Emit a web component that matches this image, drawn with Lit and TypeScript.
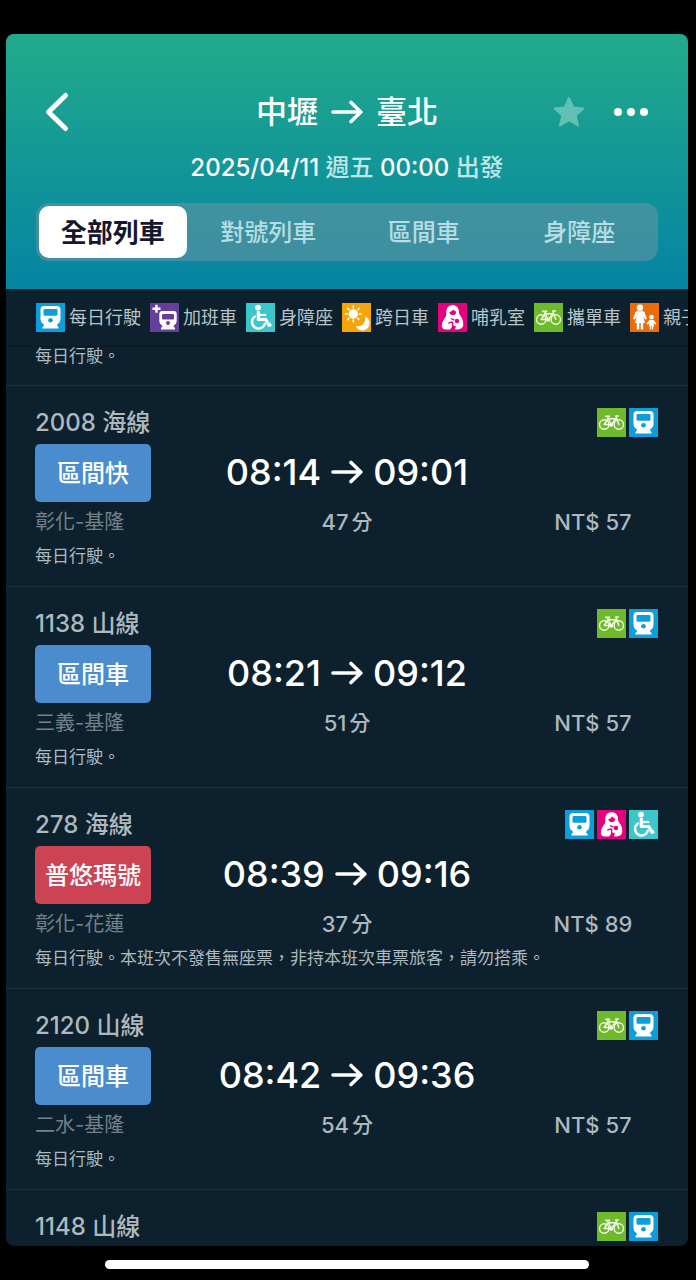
import { LitElement, html, css, svg, nothing } from "lit";
import { customElement, property, state } from "lit/decorators.js";

type IconName = "daily" | "extra" | "access" | "overnight" | "nursing" | "bike" | "family";

interface Trip {
  kind: string;
  express?: boolean;
  route: string;
  depart: string;
  arrive: string;
  minutes: number;
  fare: number;
  note: string;
}

interface Train {
  no: string;
  line: string;
  icons: IconName[];
  trip?: Trip;
}

const LEGEND: { icon: IconName; label: string }[] = [
  { icon: "daily", label: "每日行駛" },
  { icon: "extra", label: "加班車" },
  { icon: "access", label: "身障座" },
  { icon: "overnight", label: "跨日車" },
  { icon: "nursing", label: "哺乳室" },
  { icon: "bike", label: "攜單車" },
  { icon: "family", label: "親子車" },
];

const TABS = ["全部列車", "對號列車", "區間車", "身障座"];

const TRAINS: Train[] = [
  {
    no: "2008", line: "海線", icons: ["bike", "daily"],
    trip: { kind: "區間快", route: "彰化-基隆", depart: "08:14", arrive: "09:01", minutes: 47, fare: 57, note: "每日行駛。" },
  },
  {
    no: "1138", line: "山線", icons: ["bike", "daily"],
    trip: { kind: "區間車", route: "三義-基隆", depart: "08:21", arrive: "09:12", minutes: 51, fare: 57, note: "每日行駛。" },
  },
  {
    no: "278", line: "海線", icons: ["daily", "nursing", "access"],
    trip: {
      kind: "普悠瑪號", express: true, route: "彰化-花蓮", depart: "08:39", arrive: "09:16", minutes: 37, fare: 89,
      note: "每日行駛。本班次不發售無座票，非持本班次車票旅客，請勿搭乘。",
    },
  },
  {
    no: "2120", line: "山線", icons: ["bike", "daily"],
    trip: { kind: "區間車", route: "二水-基隆", depart: "08:42", arrive: "09:36", minutes: 54, fare: 57, note: "每日行駛。" },
  },
  { no: "1148", line: "山線", icons: ["bike", "daily"] },
];

const GLYPHS: Record<IconName, { bg: string; name: string; art: unknown }> = {
  daily: {
    bg: "#0c9ddb",
    name: "每日行駛",
    art: svg`
      <path fill="#fff" d="M8.300 3h12.400q3.800 0 3.800 3.800v8.700q0 4-3 5.500l-.5 1.500 1.500 1.500v1.500H6.500V24L8 22.500 7.500 21q-3-1.500-3-5.500V6.800Q4.500 3 8.300 3z"/>
      <rect x="7.500" y="6" width="14" height="6.800" rx="1.400" fill="#0c9ddb"/>
      <circle cx="14.500" cy="17.300" r="2.300" fill="#0c9ddb"/>`,
  },
  extra: {
    bg: "#65409a",
    name: "加班車",
    art: svg`
      <path stroke="#fff" stroke-width="2.400" d="M6.500 1.700v8M2.500 5.700h8"/>
      <path fill="#fff" d="M12.300 8h11.400q3 0 3 3v6.500q0 3.500-2.700 4.700l-.4 1.300 1.400 1.500v1.500H11V25l1.400-1.500-.4-1.300q-2.700-1.200-2.700-4.700V11q0-3 3-3z"/>
      <rect x="12" y="11" width="12" height="5.500" rx="1" fill="#65409a"/>
      <circle cx="18" cy="20" r="2" fill="#65409a"/>`,
  },
  access: {
    bg: "#3cc6cc",
    name: "身障座",
    art: svg`
      <circle cx="12" cy="4.600" r="2.900" fill="#fff"/>
      <path fill="none" stroke="#fff" stroke-width="3.200" stroke-linejoin="round" d="M12.300 8v8.500h7.500l3.200 5.800 2.300-.9"/>
      <path stroke="#fff" stroke-width="2.200" d="M13 12h7.200"/>
      <path fill="none" stroke="#fff" stroke-width="2.400" stroke-linecap="round" d="M9 13.600a6.500 6.500 0 1 0 9.800 7.200"/>`,
  },
  overnight: {
    bg: "#f5a50c",
    name: "跨日車",
    art: svg`
      <circle cx="11.300" cy="11" r="4.700" fill="#fff"/>
      <path stroke="#fff" stroke-width="1.500" stroke-linecap="round" d="M11.300 3v2M11.300 17v2M3.300 11h2M17.300 11h2M5.700 5.400l1.300 1.300M15.700 15.400l1.200 1.200M5.700 16.600l1.300-1.300M15.700 6.700l1.300-1.300"/>
      <path fill="#fff" d="M23.300 13.500a7.300 7.300 0 1 1-9.600 9.600q5.300.8 7.800-2.200 2.400-3 1.800-7.400z"/>`,
  },
  nursing: {
    bg: "#e4007f",
    name: "哺乳室",
    art: svg`
      <path fill="#fff" d="M14.500 2.300c4 0 6.300 2.700 6.500 6.200.1 1.800.2 2.800 1.500 4.500 2.200 2.700 3 5.800 2.700 9.300-.2 2.700-2.500 4.100-5.400 4.100l-3.200-.2 1.500-2.700-3-1-3 3.900H8c-2.900 0-4.500-1.500-4.200-4.200.4-3.300 2-5.900 3.700-8.200 1.200-1.700.6-3.400.8-5.500.3-3.700 2.400-6.200 6.200-6.200z"/>
      <path fill="#e4007f" d="M11.300 9.300q2.600-.5 4-2.700 1.600 1.800 3 2.100-.3 3.400-3.300 3.400-3 0-3.700-2.800z"/>
      <path fill="none" stroke="#e4007f" stroke-width="1.300" d="M10.300 20.500q1.700-1.500 4.500-1.500M14.600 19v6.500M13 15.500l3.500 1.700"/>
      <circle cx="19" cy="18" r="2.200" fill="#e4007f"/>`,
  },
  bike: {
    bg: "#6fb92c",
    name: "攜單車",
    art: svg`
      <g fill="none" stroke="#f3fbe6" stroke-width="1.400" stroke-linecap="round" stroke-linejoin="round">
        <circle cx="7.200" cy="16.500" r="4.700"/>
        <circle cx="21.800" cy="16.500" r="4.700"/>
        <path d="M7.200 16.500l4-6 3 6 5-6-8 .2M7.200 16.500h6M21.800 16.500l-3-8.500h2.500"/>
        <path stroke-width="1.800" d="M8.800 8.300h3.700M10.700 8.500l.8 2"/>
      </g>
      <circle cx="14.200" cy="16.800" r="2" fill="#f3fbe6"/>`,
  },
  family: {
    bg: "#ea6c0a",
    name: "親子車",
    art: svg`
      <circle cx="10" cy="4.700" r="3.200" fill="#fff"/>
      <path fill="#fff" d="M7 8.300h6q1.200 0 1.700 1.200l2.200 6.200-1.700.9-2.200-3.600 2.200 7h-2v6.500h-2.500V20H9.300v6.500H6.800V20h-2l2.200-7-2.200 3.600-1.700-.9 2.200-6.200q.5-1.200 1.700-1.200z"/>
      <circle cx="21.500" cy="14" r="2.300" fill="#fff"/>
      <path fill="#fff" d="M19.700 16.800h3.600l3.200 3.700-1 1.200-2-1.500.7 3h-1v3.300h-1.300v-3.300h-.8v3.300h-1.300v-3.300h-1l.7-3-2 1.500-1-1.200z"/>`,
  },
};

@customElement("service-icon")
class ServiceIcon extends LitElement {
  static styles = css`
    :host { display: block; width: 29px; height: 29px; flex: none; }
    .art { display: block; width: 100%; height: 100%; }
  `;
  @property() name: IconName = "daily";

  render() {
    const g = GLYPHS[this.name];
    return html`<svg class="art" viewBox="0 0 29 29" role="img" aria-label=${g.name}>
      <rect width="29" height="29" fill=${g.bg}/>${g.art}
    </svg>`;
  }
}

const arrow = html`<svg class="arrow" viewBox="0 0 32 24" aria-hidden="true">
  <path fill="none" stroke="currentColor" stroke-width="3.600" stroke-linecap="round" stroke-linejoin="round" d="M2 12h27M20 2.500L29.800 12 20 21.500"/>
</svg>`;

@customElement("train-row")
class TrainRow extends LitElement {
  static styles = css`
    :host { display: block; }
    .row {
      display: grid;
      grid-template-columns: 131px 1fr 130px;
      row-gap: 7px;
      align-items: center;
      padding: 22px 30px 16px 29px;
      color: #adb8bf;
    }
    .name { grid-column: 1 / 3; margin: 0; font-size: 24px; line-height: 28px; font-weight: 500; }
    .icons { display: flex; gap: 3px; justify-content: flex-end; }
    .kind {
      width: 116px;
      height: 58px;
      border-radius: 5px;
      background: #4a8ccd;
      color: #fff;
      font-size: 24px;
      line-height: 60px;
      font-weight: 500;
      text-align: center;
    }
    .express { background: #cc4453; }
    .times {
      display: flex;
      align-items: center;
      justify-content: center;
      gap: 10px;
      grid-column: 2;
      padding-bottom: 2px;
      color: #fff;
      font-size: 36px;
      line-height: 42px;
      font-weight: 500;
    }
    .arrow { width: 32px; height: 24px; }
    .route { grid-column: 1; color: #73818a; font-size: 20px; line-height: 26px; }
    .minutes, .fare { text-align: center; font-size: 22px; line-height: 26px; font-weight: 500; }
    .minutes { display: flex; justify-content: center; gap: 3px; }
    .cjk { font-size: 21px; }
    .note { grid-column: 1 / -1; margin: 0; font-size: 17px; line-height: 28px; white-space: nowrap; }
  `;
  @property({ attribute: false }) train!: Train;

  private renderTrip(t: Trip) {
    return html`
      <div class="kind ${t.express ? "express" : ""}">${t.kind}</div>
      <div class="times"><time>${t.depart}</time>${arrow}<time>${t.arrive}</time></div>
      <div class="route">${t.route}</div>
      <div class="minutes"><span>${t.minutes}</span><span class="cjk">分</span></div>
      <div class="fare">NT$ ${t.fare}</div>
      <p class="note">${t.note}</p>`;
  }

  render() {
    const t = this.train;
    return html`<article class="row">
      <h2 class="name">${t.no} ${t.line}</h2>
      <div class="icons">${t.icons.map((i) => html`<service-icon name=${i}></service-icon>`)}</div>
      ${t.trip ? this.renderTrip(t.trip) : nothing}
    </article>`;
  }
}

@customElement("app-root")
class AppRoot extends LitElement {
  static styles = css`
    :host {
      display: flex;
      flex-direction: column;
      box-sizing: border-box;
      height: 100vh;
      padding: 34px 8px 0 6px;
      background: #000;
      font-family: Inter, "Noto Sans CJK TC", sans-serif;
    }
    .screen {
      flex: 1;
      min-height: 0;
      display: flex;
      flex-direction: column;
      overflow: hidden;
      border-radius: 8px;
      background: #0c212d;
    }
    .top {
      flex: none;
      padding: 54px 30px 28px;
      background: linear-gradient(#22aa8b, #0584a3);
      color: #fff;
    }
    .bar { display: grid; grid-template-columns: 104px 1fr 104px; align-items: center; height: 48px; }
    .btn { border: 0; padding: 0; background: none; color: inherit; font: inherit; display: block; }
    .back { justify-self: start; padding-left: 8px; }
    .actions { display: flex; align-items: center; justify-content: flex-end; gap: 28px; padding-right: 9px; }
    .glyph { display: block; }
    .title {
      margin: 0;
      display: flex;
      align-items: center;
      justify-content: center;
      gap: 13px;
      font-size: 31px;
      line-height: 44px;
      font-weight: 500;
    }
    .arrow { width: 32px; height: 24px; }
    .date { margin: 16px 0 20px; text-align: center; font-size: 24px; line-height: 31px; font-weight: 500; }
    .soft { color: #bfe6e8; }
    .tabs {
      display: grid;
      grid-template-columns: repeat(4, 1fr);
      height: 58px;
      border-radius: 13px;
      background: rgba(114, 150, 162, 0.5);
    }
    .tab {
      border: 0;
      padding: 2px 0 0;
      margin: 3px 5px 3px 3px;
      border-radius: 10px;
      background: none;
      color: #b5dde3;
      font: 500 24px/50px Inter, "Noto Sans CJK TC", sans-serif;
    }
    .tab[aria-selected="true"] { background: #fff; color: #15172c; font-size: 26px; font-weight: 600; }
    .legend {
      flex: none;
      display: flex;
      gap: 9px;
      list-style: none;
      margin: 0;
      padding: 14px 0 14px 30px;
      overflow-x: auto;
      scrollbar-width: none;
      border-bottom: 1px solid #081823;
      color: #b9c4ca;
    }
    .item { display: flex; align-items: center; gap: 4px; flex: none; font-size: 18px; line-height: 29px; }
    .list { flex: 1; min-height: 0; overflow-y: auto; scrollbar-width: none; list-style: none; margin: 0; padding: 0; }
    .entry { border-top: 1px solid #1a303d; }
    .tail { padding: 0 30px 20px 29px; color: #adb8bf; font-size: 17px; line-height: 18px; }
    .home { flex: none; height: 34px; display: flex; justify-content: center; align-items: center; padding-top: 2px; box-sizing: border-box; }
    .pill { width: 71%; height: 9px; border-radius: 5px; background: #fff; }
  `;

  @state() private tab = 0;

  render() {
    return html`
      <main class="screen">
        <header class="top">
          <div class="bar">
            <button class="btn back" aria-label="返回">
              <svg class="glyph" width="26" height="42" viewBox="0 0 26 42" aria-hidden="true">
                <path fill="none" stroke="currentColor" stroke-width="5" stroke-linecap="round" stroke-linejoin="round" d="M21.500 4.500L4.500 21l17 16.500"/>
              </svg>
            </button>
            <h1 class="title"><span>中壢</span>${arrow}<span>臺北</span></h1>
            <div class="actions">
              <button class="btn" aria-label="加入最愛">
                <svg class="glyph" width="32" height="32" viewBox="0 0 32 32" aria-hidden="true">
                  <path fill="#62c1b4" stroke="#62c1b4" stroke-width="2" stroke-linejoin="round" d="M16 2l4.200 9.500 10.300 1-7.800 6.900 2.300 10.100-9-5.300-9 5.300 2.300-10.100-7.800-6.900 10.300-1z"/>
                </svg>
              </button>
              <button class="btn" aria-label="更多">
                <svg class="glyph" width="36" height="10" viewBox="0 0 36 10" aria-hidden="true">
                  <g fill="currentColor"><circle cx="5" cy="5" r="4"/><circle cx="18" cy="5" r="4"/><circle cx="31" cy="5" r="4"/></g>
                </svg>
              </button>
            </div>
          </div>
          <p class="date">2025/04/11 <span class="soft">週五</span> 00:00 <span class="soft">出發</span></p>
          <div class="tabs" role="tablist">
            ${TABS.map((label, i) => html`<button class="tab" role="tab" aria-selected=${i === this.tab ? "true" : "false"} @click=${() => (this.tab = i)}>${label}</button>`)}
          </div>
        </header>
        <ul class="legend">
          ${LEGEND.map((l) => html`<li class="item"><service-icon name=${l.icon}></service-icon>${l.label}</li>`)}
        </ul>
        <ul class="list">
          <li class="tail">每日行駛。</li>
          ${TRAINS.map((t) => html`<li class="entry"><train-row .train=${t}></train-row></li>`)}
        </ul>
      </main>
      <div class="home"><div class="pill"></div></div>
    `;
  }
}
